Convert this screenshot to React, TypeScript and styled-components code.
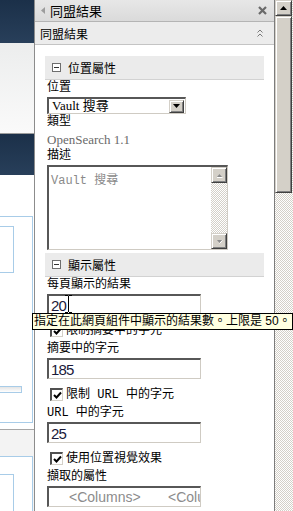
import React from "react";
import styled, { createGlobalStyle } from "styled-components";

const GlobalStyle = createGlobalStyle`
  html, body {
    margin: 0;
    padding: 0;
  }
  body {
    width: 293px;
    height: 511px;
    overflow: hidden;
    background: #fff;
    font-family: "Noto Sans CJK TC", "Liberation Sans", sans-serif;
    font-size: 12px;
    color: #000;
  }
`;

const CJK = `"Noto Sans CJK TC", sans-serif`;

const Screen = styled.div`
  position: relative;
  display: flex;
  width: 293px;
  height: 511px;
  overflow: hidden;
`;

/* ---------- page behind the tool pane ---------- */

const Backdrop = styled.div`
  width: 34px;
  flex: none;
  display: flex;
  flex-direction: column;
  overflow: hidden;
`;

const NavBand = styled.div<{ $h: number }>`
  flex: none;
  height: ${(p) => p.$h}px;
  background: linear-gradient(#1b3049, #283f5a);
`;

const Ribbon = styled.div`
  flex: none;
  height: 90px;
  background: linear-gradient(#eceded, #fafafa);
  border-bottom: 1px solid #9c9c9c;
`;

const Canvas = styled.div`
  flex: 1;
  background: #fff;
  padding-top: 41px;
  display: flex;
  flex-direction: column;
`;

const Zone = styled.div<{ $h: number; $pad: number }>`
  flex: none;
  box-sizing: border-box;
  margin-left: -2px;
  width: 35px;
  height: ${(p) => p.$h}px;
  padding-top: ${(p) => p.$pad}px;
  border: 1px solid #a8cce8;
  border-left: none;
  background: #fff;
  display: flex;
  flex-direction: column;
`;

const ZoneInner = styled.div<{ $h: number }>`
  flex: none;
  box-sizing: border-box;
  width: 16px;
  height: ${(p) => p.$h}px;
  border: 1px solid #a8cce8;
  border-left: none;
`;

const ZoneBar = styled.div`
  flex: none;
  box-sizing: border-box;
  margin-top: 113px;
  width: 24px;
  height: 7px;
  border: 1px solid #a8cce8;
  border-left: none;
  background: linear-gradient(#e4e4e4, #fff);
`;

const Footer = styled.div`
  flex: 1;
  margin-top: 6px;
  border-top: 1px solid #a6a6a6;
  background: #f3f3f3;
  padding-top: 26px;
`;

/* ---------- tool pane ---------- */

const Pane = styled.div`
  width: 241px;
  flex: none;
  box-sizing: border-box;
  border-left: 1px solid #8c8c8c;
  border-right: 1px solid #7c7c7c;
  display: flex;
  flex-direction: column;
  background: #fff;
`;

const TitleBar = styled.div`
  flex: none;
  box-sizing: border-box;
  height: 22px;
  display: flex;
  align-items: center;
  padding: 0 7px 0 6px;
  background: linear-gradient(#e7e7e7, #dadada);
  border-bottom: 1px solid #b4b4b4;
  font-family: ${CJK};
  font-size: 13px;
`;

const TitleText = styled.span`
  flex: 1;
  margin-left: 5px;
  line-height: 20px;
`;

const SubBar = styled.div`
  flex: none;
  box-sizing: border-box;
  height: 23px;
  display: flex;
  align-items: center;
  padding: 0 11px 0 5px;
  background: #ececec;
  border-bottom: 1px solid #c4c4c4;
  font-family: ${CJK};
  font-size: 12px;
`;

const SubText = styled.span`
  flex: 1;
`;

const Body = styled.div`
  flex: 1;
  padding: 11px 10px 0 10px;
  display: flex;
  flex-direction: column;
`;

const SectionHeader = styled.div<{ $gap?: number }>`
  flex: none;
  box-sizing: border-box;
  height: 24px;
  margin-top: ${(p) => p.$gap ?? 0}px;
  display: flex;
  align-items: center;
  gap: 7px;
  padding-left: 7px;
  background: #ebebeb;
  border-bottom: 1px solid #d2d2d2;
  font-family: ${CJK};
  font-size: 12px;
`;

const Collapse = styled.span`
  box-sizing: border-box;
  width: 9px;
  height: 9px;
  border: 1px solid #6e6e6e;
  background: #fff;
  display: flex;
  align-items: center;
  justify-content: center;
  &::after {
    content: "";
    width: 5px;
    height: 1px;
    background: #333;
  }
`;

const Label = styled.div`
  flex: none;
  height: 17px;
  line-height: 17px;
  padding-left: 2px;
  font-family: "Liberation Mono", ${CJK};
  font-size: 12px;
  white-space: nowrap;
`;

const TypeText = styled.div`
  flex: none;
  height: 17px;
  line-height: 17px;
  padding-left: 2px;
  font-family: "Liberation Serif", serif;
  font-size: 13px;
  color: #6a6a6a;
`;

const sunken = `
  box-sizing: border-box;
  border-style: solid;
  border-width: 2px 1px 1px 2px;
  border-color: #575757 #cfcbc3 #cfcbc3 #575757;
  background: #fff;
`;

const Select = styled.div`
  ${sunken}
  flex: none;
  margin-left: 2px;
  width: 139px;
  height: 17px;
  display: flex;
  align-items: center;
  padding-left: 3px;
  font-family: "Liberation Serif", ${CJK};
  font-size: 13px;
`;

const SelectValue = styled.span`
  flex: 1;
  line-height: 14px;
`;

const raised = `
  box-sizing: border-box;
  background: #d4d0c8;
  border: 1px solid;
  border-color: #d4d0c8 #404040 #404040 #d4d0c8;
  box-shadow: inset 1px 1px #fff, inset -1px -1px #808080;
  display: flex;
  align-items: center;
  justify-content: center;
`;

const DropButton = styled.span`
  ${raised}
  width: 15px;
  height: 13px;
  margin-right: 1px;
`;

const TextArea = styled.div`
  ${sunken}
  flex: none;
  margin-left: 2px;
  width: 181px;
  height: 85px;
  display: flex;
`;

const AreaText = styled.div`
  flex: 1;
  padding: 3px 0 0 2px;
  font-family: "Liberation Mono", ${CJK};
  font-size: 12px;
  color: #8a8a8a;
`;

const checker = `
  background-color: #fff;
  background-image: repeating-conic-gradient(#d4d0c8 0 25%, #fff 0 50%);
  background-size: 2px 2px;
`;

const AreaScroll = styled.div`
  width: 16px;
  display: flex;
  flex-direction: column;
  justify-content: space-between;
  ${checker}
`;

const ArrowButton = styled.span<{ $h: number }>`
  ${raised}
  width: 16px;
  height: ${(p) => p.$h}px;
`;

const Input = styled.div<{ $muted?: boolean }>`
  ${sunken}
  flex: none;
  margin-left: 2px;
  width: 154px;
  height: 21px;
  display: flex;
  align-items: center;
  padding-left: 2px;
  overflow: hidden;
  white-space: nowrap;
  font-family: "Liberation Sans", sans-serif;
  font-size: ${(p) => (p.$muted ? 14 : 15)}px;
  letter-spacing: ${(p) => (p.$muted ? 0 : -0.8)}px;
  color: ${(p) => (p.$muted ? "#8c8c8c" : "#1a1a3a")};
`;

const Column = styled.span<{ $w?: number; $indent?: number }>`
  flex: none;
  box-sizing: border-box;
  width: ${(p) => (p.$w ? `${p.$w}px` : "auto")};
  padding-left: ${(p) => p.$indent ?? 0}px;
`;

const CheckRow = styled.div`
  flex: none;
  box-sizing: border-box;
  height: 26px;
  padding: 9px 0 0 5px;
  display: flex;
  align-items: flex-start;
  gap: 3px;
  font-family: "Liberation Mono", ${CJK};
  font-size: 12px;
  white-space: nowrap;
`;

const CheckBox = styled.span`
  flex: none;
  box-sizing: border-box;
  width: 13px;
  height: 13px;
  border-style: solid;
  border-width: 2px 1px 1px 2px;
  border-color: #505050 #d4d0c8 #d4d0c8 #505050;
  background: #fff;
  display: flex;
  align-items: center;
  justify-content: center;
`;

const CheckText = styled.span`
  line-height: 14px;
`;

/* ---------- outer scrollbar ---------- */

const ScrollBar = styled.div`
  width: 18px;
  flex: none;
  display: flex;
  flex-direction: column;
  ${checker}
`;

const ScrollButton = styled.span`
  ${raised}
  width: 17px;
  height: 16px;
`;

const Thumb = styled.span`
  ${raised}
  width: 17px;
  height: 177px;
`;

/* ---------- overlays ---------- */

const Tooltip = styled.div`
  position: absolute;
  left: 32px;
  top: 313px;
  box-sizing: border-box;
  width: 261px;
  height: 17px;
  padding-left: 1px;
  background: #ffffe1;
  border: 1px solid #000;
  font-family: "Liberation Sans", ${CJK};
  font-size: 12px;
  line-height: 15px;
  white-space: nowrap;
  overflow: hidden;
`;

const Caret = styled.svg`
  position: absolute;
  left: 65px;
  top: 295px;
`;

const Check = () => (
  <svg width="9" height="9" viewBox="0 0 9 9">
    <path d="M1 4 L3.5 6.5 L8 1.5" fill="none" stroke="#000" strokeWidth="2" />
  </svg>
);

const Tri = ({ up, color }: { up: boolean; color: string }) => (
  <svg width="7" height="4" viewBox="0 0 7 4">
    <path d={up ? "M0 4 L3.5 0 L7 4z" : "M0 0 L7 0 L3.5 4z"} fill={color} />
  </svg>
);

const GreyTri = ({ up }: { up: boolean }) => (
  <svg width="9" height="6" viewBox="0 0 9 6">
    <path d={up ? "M2 5 L4.5 2 L7 5z" : "M2 2 L7 2 L4.5 5z"} fill="#8a8a8a" />
    <path d={up ? "M2 5.5 H7.5" : "M4.5 5.5 L7.5 2.5"} stroke="#fff" strokeWidth="1" />
  </svg>
);

const App: React.FC = () => (
  <Screen>
    <GlobalStyle />
    <Backdrop>
      <NavBand $h={43} />
      <Ribbon />
      <NavBand $h={41} />
      <Canvas>
        <Zone $h={207} $pad={9}>
          <ZoneInner $h={47} />
          <ZoneBar />
        </Zone>
        <Footer>
          <Zone $h={80} $pad={17}>
            <ZoneInner $h={60} />
          </Zone>
        </Footer>
      </Canvas>
    </Backdrop>

    <Pane>
      <TitleBar>
        <svg width="4" height="7" viewBox="0 0 4 7">
          <path d="M4 0 L0 3.5 L4 7z" fill="#9c9c9c" />
        </svg>
        <TitleText>同盟結果</TitleText>
        <svg width="9" height="9" viewBox="0 0 9 9">
          <path d="M1 1 L8 8 M8 1 L1 8" stroke="#6a6a6a" strokeWidth="2.2" />
        </svg>
      </TitleBar>
      <SubBar>
        <SubText>同盟結果</SubText>
        <svg width="6" height="9" viewBox="0 0 6 9">
          <path d="M0.5 3.5 L3 1 L5.5 3.5 M0.5 7.5 L3 5 L5.5 7.5" fill="none" stroke="#7a7a7a" strokeWidth="1" />
        </svg>
      </SubBar>

      <Body>
        <SectionHeader>
          <Collapse />
          位置屬性
        </SectionHeader>
        <Label>位置</Label>
        <Select>
          <SelectValue>Vault 搜尋</SelectValue>
          <DropButton>
            <Tri up={false} color="#000" />
          </DropButton>
        </Select>
        <Label>類型</Label>
        <TypeText>OpenSearch 1.1</TypeText>
        <Label>描述</Label>
        <TextArea>
          <AreaText>Vault 搜尋</AreaText>
          <AreaScroll>
            <ArrowButton $h={16}>
              <GreyTri up />
            </ArrowButton>
            <ArrowButton $h={16}>
              <GreyTri up={false} />
            </ArrowButton>
          </AreaScroll>
        </TextArea>

        <SectionHeader $gap={3}>
          <Collapse />
          顯示屬性
        </SectionHeader>
        <Label>每頁顯示的結果</Label>
        <Input>20</Input>
        <CheckRow>
          <CheckBox>
            <Check />
          </CheckBox>
          <CheckText>限制摘要中的字元</CheckText>
        </CheckRow>
        <Label>摘要中的字元</Label>
        <Input>185</Input>
        <CheckRow>
          <CheckBox>
            <Check />
          </CheckBox>
          <CheckText>限制 URL 中的字元</CheckText>
        </CheckRow>
        <Label>URL 中的字元</Label>
        <Input>25</Input>
        <CheckRow>
          <CheckBox>
            <Check />
          </CheckBox>
          <CheckText>使用位置視覺效果</CheckText>
        </CheckRow>
        <Label>擷取的屬性</Label>
        <Input $muted>
          <Column $w={117} $indent={18}>&lt;Columns&gt;</Column>
          <Column>&lt;Columns&gt;</Column>
        </Input>
      </Body>
    </Pane>

    <ScrollBar>
      <ScrollButton>
        <Tri up color="#000" />
      </ScrollButton>
      <Thumb />
    </ScrollBar>

    <Caret width="7" height="18" viewBox="0 0 7 18">
      <path d="M0 0.5 H3 M4 0.5 H7 M3.5 1 V17 M0 17.5 H3 M4 17.5 H7" stroke="#000" strokeWidth="1" />
    </Caret>
    <Tooltip>指定在此網頁組件中顯示的結果數。上限是 50。</Tooltip>
  </Screen>
);

export default App;
